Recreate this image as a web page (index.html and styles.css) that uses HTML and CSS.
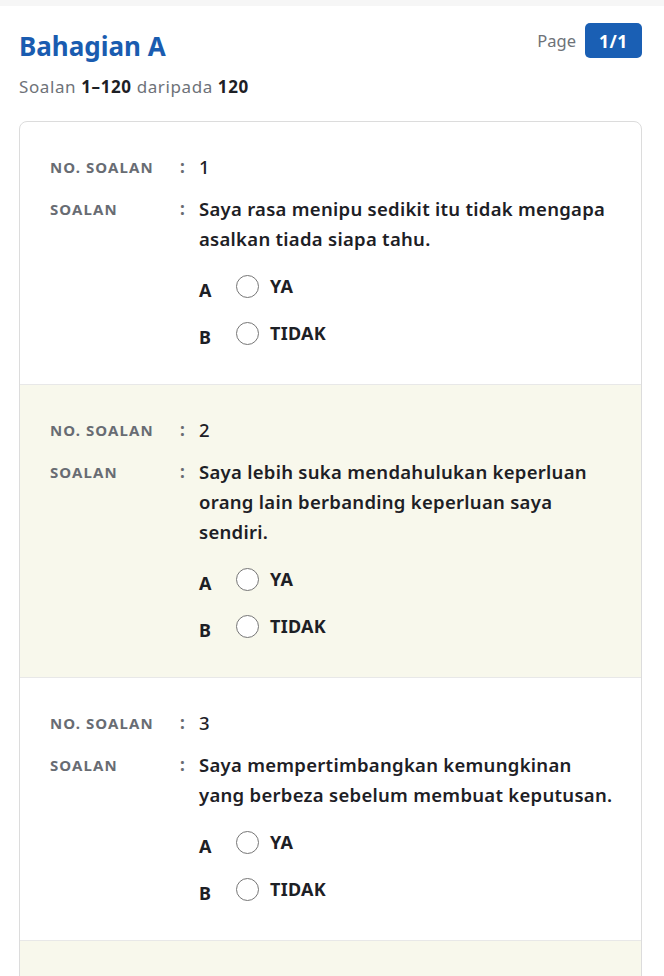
FILE: index.html
```html
<!DOCTYPE html>
<html lang="ms">
<head>
<meta charset="utf-8">
<title>Bahagian A</title>
<link rel="stylesheet" href="styles.css">
</head>
<body>
<div class="topbar"></div>
<main class="page">
  <header class="head">
    <div class="head-text">
      <h1 class="title">Bahagian A</h1>
      <p class="sub">Soalan <b>1–120</b> daripada <b>120</b></p>
    </div>
    <div class="pager">
      <span class="pager-label">Page</span>
      <span class="pager-badge">1/1</span>
    </div>
  </header>

  <section class="card">
    <div class="q">
      <div class="lbl">NO. SOALAN</div><div class="colon">:</div><div class="num">1</div>
      <div class="lbl">SOALAN</div><div class="colon">:</div><div class="text">Saya rasa menipu sedikit itu tidak mengapa asalkan tiada siapa tahu.</div>
      <div class="opts">
        <label class="opt"><span class="letter">A</span><span class="radio"></span><span class="otext">YA</span></label>
        <label class="opt"><span class="letter">B</span><span class="radio"></span><span class="otext">TIDAK</span></label>
      </div>
    </div>
    <div class="q alt">
      <div class="lbl">NO. SOALAN</div><div class="colon">:</div><div class="num">2</div>
      <div class="lbl">SOALAN</div><div class="colon">:</div><div class="text">Saya lebih suka mendahulukan keperluan orang lain berbanding keperluan saya sendiri.</div>
      <div class="opts">
        <label class="opt"><span class="letter">A</span><span class="radio"></span><span class="otext">YA</span></label>
        <label class="opt"><span class="letter">B</span><span class="radio"></span><span class="otext">TIDAK</span></label>
      </div>
    </div>
    <div class="q">
      <div class="lbl">NO. SOALAN</div><div class="colon">:</div><div class="num">3</div>
      <div class="lbl">SOALAN</div><div class="colon">:</div><div class="text">Saya mempertimbangkan kemungkinan yang berbeza sebelum membuat keputusan.</div>
      <div class="opts">
        <label class="opt"><span class="letter">A</span><span class="radio"></span><span class="otext">YA</span></label>
        <label class="opt"><span class="letter">B</span><span class="radio"></span><span class="otext">TIDAK</span></label>
      </div>
    </div>
    <div class="q alt q-next"></div>
  </section>
</main>
</body>
</html>
```
FILE: styles.css
```css
* { box-sizing: border-box; }
html, body { margin: 0; padding: 0; background: #fff; }
body {
  font-family: "Noto Sans", "Open Sans", sans-serif;
  color: #1d2025;
  overflow: hidden;
  height: 976px;
}
.topbar {
  height: 6px;
  background: #f6f6f6;
}
.page { padding: 0 22px 0 19px; }
.head {
  display: flex;
  justify-content: space-between;
  align-items: flex-start;
  padding-top: 17px;
}
.title {
  margin: 0;
  font-size: 26px;
  line-height: 46px;
  font-weight: 700;
  color: #1a5cb0;
}
.sub {
  margin: 8px 0 0;
  font-size: 17px;
  letter-spacing: 0.6px;
  line-height: 20px;
  color: #6e7278;
}
.sub b { color: #1d2025; font-weight: 700; }
.pager {
  display: flex;
  align-items: center;
  gap: 9px;
}
.pager-label { font-size: 16.5px; color: #6e7278; }
.pager-badge {
  display: inline-flex;
  align-items: center;
  justify-content: center;
  width: 57px;
  height: 35px;
  border-radius: 5px;
  background: #1a5fb4;
  color: #fff;
  font-weight: 700;
  font-size: 17.5px;
  letter-spacing: 0.5px;
}
.card {
  margin-top: 24px;
  border: 1px solid #dcdcdc;
  border-radius: 8px;
  overflow: hidden;
}
.q {
  display: grid;
  grid-template-columns: 130px 19px 1fr;
  row-gap: 12px;
  padding: 30px 22px 34px 30px;
  border-bottom: 1px solid #e8e8e8;
}
.q.alt { background: #f8f8ec; }
.q-next { height: 80px; border-bottom: none; }
.lbl {
  font-size: 15px;
  line-height: 30px;
  font-weight: 700;
  color: #686c73;
  letter-spacing: 1.1px;
}
.colon {
  font-size: 17px;
  line-height: 30px;
  color: #686c73;
  font-weight: 700;
}
.num {
  font-size: 18.5px;
  line-height: 30px;
  font-weight: 500;
}
.text {
  font-size: 18.5px;
  letter-spacing: 0.28px;
  line-height: 30px;
  font-weight: 600;
}
.opts {
  grid-column: 3;
  display: flex;
  flex-direction: column;
  gap: 13px;
  padding-top: 3px;
}
.opt {
  display: flex;
  align-items: center;
  height: 34px;
  font-weight: 700;
  font-size: 18px;
}
.letter {
  width: 37px;
  padding-top: 7px;
}
.radio {
  width: 23px;
  height: 23px;
  border: 1.5px solid #767676;
  border-radius: 50%;
  background: #fff;
  margin-right: 11px;
}
.otext { font-size: 18px; letter-spacing: 0.3px; }
```
